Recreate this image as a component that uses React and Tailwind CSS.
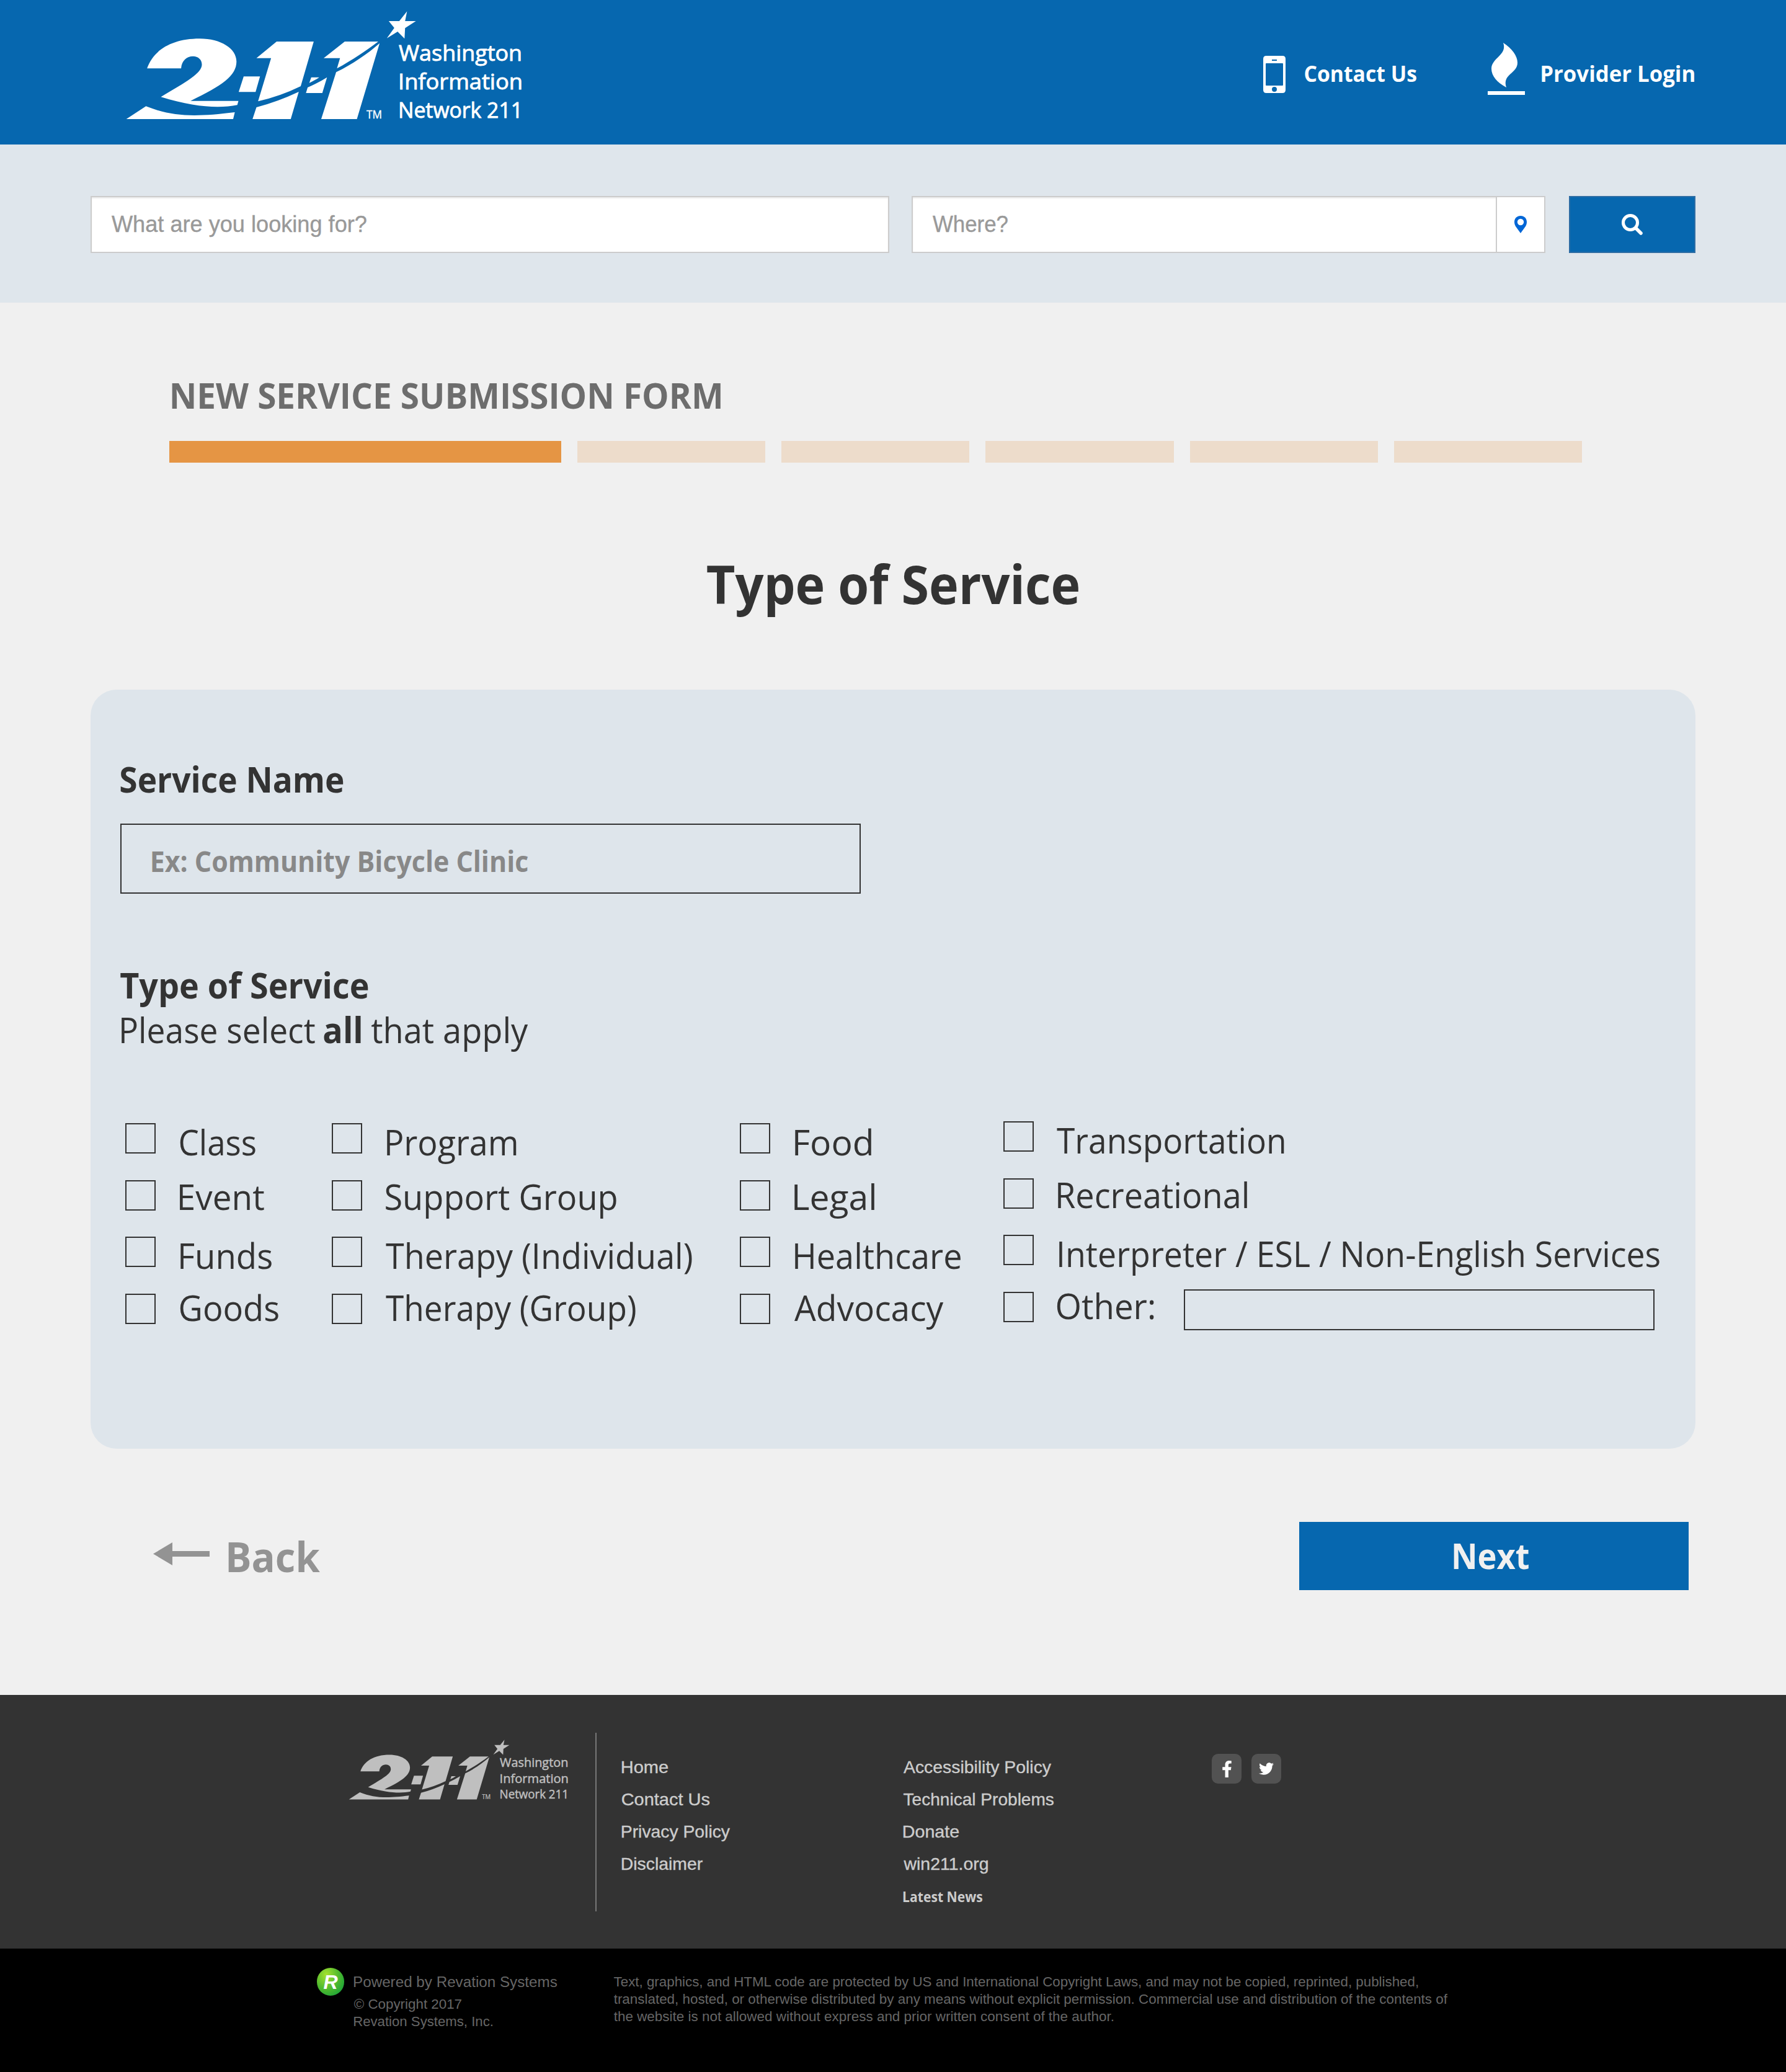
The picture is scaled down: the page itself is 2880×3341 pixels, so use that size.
import { useLayoutEffect, useRef, useState } from "react";
import { FaFacebookF, FaTwitter } from "react-icons/fa";

/* One line of text whose inked width is fitted to `w` pixels. */
function Fit({ w, className = "", children }) {
  const ref = useRef(null);
  const [fit, setFit] = useState({ s: 1, dx: 0 });
  useLayoutEffect(() => {
    const cs = getComputedStyle(ref.current);
    const ctx = document.createElement("canvas").getContext("2d");
    // Measured at ten times the size, so that rounded glyph bounds stay precise.
    ctx.font = `${cs.fontWeight} ${parseFloat(cs.fontSize) * 10}px ${cs.fontFamily}`;
    const m = ctx.measureText(children);
    const left = m.actualBoundingBoxLeft / 10;
    const right = m.actualBoundingBoxRight / 10;
    const s = w / (left + right);
    setFit({ s, dx: left * s });
  }, [w, children]);
  return (
    <span className={`block shrink-0 ${className}`} style={{ width: w }}>
      <span
        ref={ref}
        className="block w-max origin-top-left whitespace-nowrap"
        style={{ transform: `translateX(${fit.dx}px) scaleX(${fit.s})` }}
      >
        {children}
      </span>
    </span>
  );
}

function Logo({ className }) {
  return (
    <svg viewBox="0 0 700 240" className={className} fill="currentColor">
      <g transform="scale(0.44643 0.33333)">
        <path d="M128 331C150 245 215 187 318 187C395 187 451 235 451 298C451 365 400 415 285 488H458L454 508C390 525 300 520 178 469C270 395 326 355 326 312C326 288 312 272 294 272C272 272 253 292 251 331Z" />
        <path d="M53 576L124 514C220 565 300 567 445 543L439 576Z" />
        <path d="M477 370H536L520 445H459Z" />
        <path d="M596 201H730L683 417Q610 465 529 490L576 281H523Z" />
        <path d="M523 519Q600 492 676 444L647 576H509Z" />
        <path d="M721 374H750Q735 388 714 401Z" />
        <path d="M708 423Q745 402 778 374L761 450H702Z" />
        <path d="M842 201H963C920 245 870 290 814 331L825 281H766Z" />
        <path d="M811 349C870 310 925 260 968 209L886 576H757Z" />
        <path d="M1067 55L1060 102H1099L1060 136L1058 187L1033 153L994 185L1021 135L1001 102H1039Z" />
      </g>
      <g className="font-['Open_Sans',sans-serif]" stroke="currentColor" strokeWidth="0.9">
        <text x="463" y="98" fontSize="35.5" textLength="199" lengthAdjust="spacingAndGlyphs">Washington</text>
        <text x="462" y="144" fontSize="35.5" textLength="201" lengthAdjust="spacingAndGlyphs">Information</text>
        <text x="462" y="190" fontSize="35.5" textLength="201" lengthAdjust="spacingAndGlyphs">Network 211</text>
        <text x="411" y="191" fontSize="18" textLength="25" lengthAdjust="spacingAndGlyphs" strokeWidth="0.4">TM</text>
      </g>
    </svg>
  );
}

function Header() {
  return (
    <header className="flex h-[233px] items-start bg-[#0667af] text-white">
      <Logo className="ml-[180px] h-[240px] w-[700px] shrink-0" />
      <svg viewBox="0 0 36 60" className="mt-[90px] ml-[1157px] h-[60px] w-9 shrink-0">
        <path
          fill="currentColor"
          fillRule="evenodd"
          d="M5 0H31Q36 0 36 5V55Q36 60 31 60H5Q0 60 0 55V5Q0 0 5 0ZM5 12Q4 12 4 13V47Q4 48 5 48H31Q32 48 32 47V13Q32 12 31 12ZM14 6V8H22V6ZM18 50A4 4 0 1 0 18 58A4 4 0 1 0 18 50Z"
        />
      </svg>
      <Fit w={180} className="mt-[98px] ml-[31px] text-[36.5px] leading-10 font-bold">Contact Us</Fit>
      <svg viewBox="0 0 60 84" className="mt-[69px] ml-[115px] h-[84px] w-[60px] shrink-0" fill="currentColor">
        <path d="M25 0C39 9 48 21 48 32C48 50 23 50 30 72C15 64 6 53 6 42C6 24 32 20 25 0Z" />
        <rect x="0" y="78" width="60" height="6" />
      </svg>
      <Fit w={246} className="mt-[98px] ml-[27px] text-[36.5px] leading-10 font-bold">Provider Login</Fit>
    </header>
  );
}

function SearchBar() {
  return (
    <section className="flex h-[255px] items-start bg-[#dfe6ec] px-[146px] pt-[83px] font-['Liberation_Sans',Arial,sans-serif] text-4xl text-[#999] [-webkit-text-stroke:0.4px]">
      <div className="flex h-[92px] w-[1288px] items-center border-2 border-[#ccc] bg-white pl-8 shadow-[inset_0_2px_2px_rgba(0,0,0,0.08)]">
        <Fit w={411} className="leading-10">What are you looking for?</Fit>
      </div>
      <div className="ml-9 flex h-[92px] w-[1022px] border-2 border-[#ccc] bg-white shadow-[inset_0_2px_2px_rgba(0,0,0,0.08)]">
        <div className="flex flex-1 items-center pl-8">
          <Fit w={121} className="leading-10">Where?</Fit>
        </div>
        <div className="flex w-[78px] items-center justify-center border-l-2 border-[#ccc] bg-white">
          <svg viewBox="0 0 20 28" className="h-7 w-5" fill="#0066d6">
            <path
              fillRule="evenodd"
              d="M10 0C16 0 20 4.200 20 10C20 13 19 15 18 17L10 28L2 17C1 15 0 13 0 10C0 4.200 4 0 10 0ZM10 4.800A5.200 5.200 0 1 0 10 15.200A5.200 5.200 0 1 0 10 4.800Z"
            />
          </svg>
        </div>
      </div>
      <button className="ml-[38px] flex h-[92px] w-[204px] items-center justify-center border-2 border-[#2e6da4] bg-[#0667af]">
        <svg viewBox="0 0 34 34" className="h-[34px] w-[34px]" fill="none" stroke="#fff">
          <circle cx="14" cy="14" r="11.500" strokeWidth="5" />
          <path d="M23 23L31 31" strokeWidth="5.500" strokeLinecap="round" />
        </svg>
      </button>
    </section>
  );
}

const columns = [
  {
    className: "w-[333px]",
    items: [["Class", 39, 122], ["Event", 39, 136], ["Funds", 40, 147], ["Goods", 39, 159]],
  },
  {
    className: "w-[658px]",
    items: [["Program", 40, 209], ["Support Group", 38, 372], ["Therapy (Individual)", 38, 494], ["Therapy (Group)", 38, 403]],
  },
  {
    className: "w-[425px]",
    items: [["Food", 40, 123], ["Legal", 39, 129], ["Healthcare", 40, 267], ["Advocacy", 39, 241]],
  },
  {
    className: "-mt-[3px] w-[1080px]",
    items: [["Transportation", 37, 367], ["Recreational", 39, 305], ["Interpreter / ESL / Non-English Services", 41, 968], ["Other:", 37, 157]],
  },
];
const rowHeights = ["h-[92px]", "h-[91px]", "h-[92px]", "h-[60px]"];
const labelShift = ["mt-0", "-mt-1", "mt-0", "-mt-2"];

function ServicePanel() {
  return (
    <section className="mx-[146px] mt-[126px] h-[1224px] rounded-[42px] bg-[#dee5eb] pt-[114px] text-[57px] leading-[60px] text-[#333]">
      <Fit w={360} className="ml-12 font-bold">Service Name</Fit>
      <div className="mt-[42px] ml-12 h-[113px] w-[1194px] border-2 border-[#333] pt-[33px] pl-[49px]">
        <Fit w={606} className="text-[46px] leading-[50px] font-bold text-[#888]">Ex: Community Bicycle Clinic</Fit>
      </div>
      <Fit w={400} className="mt-[117px] ml-12 font-bold">Type of Service</Fit>
      <p className="mt-3 ml-[50px] flex">
        <Fit w={312}>Please select</Fit>
        <Fit w={60} className="ml-[14px] font-bold">all</Fit>
        <Fit w={253} className="ml-[17px]">that apply</Fit>
      </p>
      <div className="mt-[121px] ml-14 flex items-start">
        {columns.map((col) => (
          <div key={col.items[0][0]} className={`shrink-0 ${col.className}`}>
            {col.items.map(([label, gap, w], i) => (
              <div key={label} className={`flex items-start ${rowHeights[i]}`}>
                <span className="h-[49px] w-[49px] shrink-0 border-2 border-[#333]" />
                <span className={`shrink-0 ${labelShift[i]}`} style={{ marginLeft: gap }}>
                  <Fit w={w}>{label}</Fit>
                </span>
                {label === "Other:" && (
                  <span className="-mt-1 ml-[48px] h-[66px] w-[759px] shrink-0 border-2 border-[#333]" />
                )}
              </div>
            ))}
          </div>
        ))}
      </div>
    </section>
  );
}

function Footer() {
  return (
    <footer className="font-['Liberation_Sans',Arial,sans-serif]">
      <div className="flex h-[409px] items-start bg-[#333] text-[28px] leading-[52px] text-[#ccc]">
        <Logo className="mt-[62px] ml-[549px] h-[133px] w-[389px] shrink-0 text-[#bfbfbf]" />
        <div className="mt-[61px] ml-[22px] h-[288px] w-[2px] bg-[#777]" />
        <nav className="mt-[91px] ml-[41px] w-[454px] [-webkit-text-stroke:0.4px]">
          <Fit w={74}>Home</Fit>
          <Fit w={141}>Contact Us</Fit>
          <Fit w={174}>Privacy Policy</Fit>
          <Fit w={130}>Disclaimer</Fit>
        </nav>
        <nav className="mt-[91px] w-[497px] [-webkit-text-stroke:0.4px]">
          <Fit w={238}>Accessibility Policy</Fit>
          <Fit w={242}>Technical Problems</Fit>
          <Fit w={89}>Donate</Fit>
          <Fit w={136}>win211.org</Fit>
          <Fit w={127} className="mt-px font-['Open_Sans',sans-serif] text-[22.5px] font-bold [-webkit-text-stroke:0px]">Latest News</Fit>
        </nav>
        <div className="mt-[95px] flex gap-4 text-white">
          <span className="flex h-12 w-12 items-center justify-center rounded-[10px] bg-[#525252]">
            <FaFacebookF className="h-[27px] w-[17px]" />
          </span>
          <span className="flex h-12 w-12 items-center justify-center rounded-[10px] bg-[#525252]">
            <FaTwitter className="h-6 w-6" />
          </span>
        </div>
      </div>
      <div className="flex h-[199px] items-start bg-black text-[22px] leading-7 text-[#666]">
        <span className="mt-[31px] ml-[511px] flex h-[45px] w-11 items-center justify-center rounded-full bg-radial-[at_35%_25%] from-[#a6e22e] via-[#4db82e] to-[#009a3e] text-[32px] font-bold text-white italic">
          R
        </span>
        <div className="mt-10 ml-4 w-[419px]">
          <Fit w={327} className="text-[23.5px]">Powered by Revation Systems</Fit>
          <Fit w={173} className="mt-2">© Copyright 2017</Fit>
          <Fit w={223}>Revation Systems, Inc.</Fit>
        </div>
        <div className="mt-10">
          <Fit w={1297}>Text, graphics, and HTML code are protected by US and International Copyright Laws, and may not be copied, reprinted, published,</Fit>
          <Fit w={1344}>translated, hosted, or otherwise distributed by any means without explicit permission. Commercial use and distribution of the contents of</Fit>
          <Fit w={805}>the website is not allowed without express and prior written consent of the author.</Fit>
        </div>
      </div>
    </footer>
  );
}

export default function App() {
  return (
    <div className="w-[2880px] overflow-hidden bg-[#f0f0f0] font-['Open_Sans','Noto_Sans',sans-serif]">
      <Header />
      <SearchBar />
      <main className="h-[2245px] pt-[119px]">
        <Fit w={885} className="ml-[277px] text-[57px] leading-[60px] font-bold text-[#6d6d6d]">NEW SERVICE SUBMISSION FORM</Fit>
        <div className="mt-11 ml-[273px] flex h-[35px] w-[2278px] gap-[26px]">
          <div className="w-[632px] shrink-0 bg-[#e59544]" />
          <div className="flex-1 bg-[#eddccb]" />
          <div className="flex-1 bg-[#eddccb]" />
          <div className="flex-1 bg-[#eddccb]" />
          <div className="flex-1 bg-[#eddccb]" />
          <div className="flex-1 bg-[#eddccb]" />
        </div>
        <h1 className="mt-[150px] ml-[1140px] text-[85.4px] leading-[90px] font-bold text-[#333]">
          <Fit w={600}>Type of Service</Fit>
        </h1>
        <ServicePanel />
        <div className="mt-[118px] flex items-start pl-[247px]">
          <svg viewBox="0 0 91 37" className="mt-[33px] h-[37px] w-[91px] shrink-0" fill="#939393">
            <path d="M0 18.500L31 0V14H91V23H31V37Z" />
          </svg>
          <Fit w={148} className="mt-5 ml-[30px] text-[66px] leading-[70px] font-bold text-[#939393]">Back</Fit>
          <button className="ml-[1579px] flex h-[110px] w-[628px] justify-center bg-[#0667af] pt-6 pr-[9px] text-[57px] leading-[60px] font-bold text-[#f0f0f0]">
            <Fit w={121}>Next</Fit>
          </button>
        </div>
      </main>
      <Footer />
    </div>
  );
}
